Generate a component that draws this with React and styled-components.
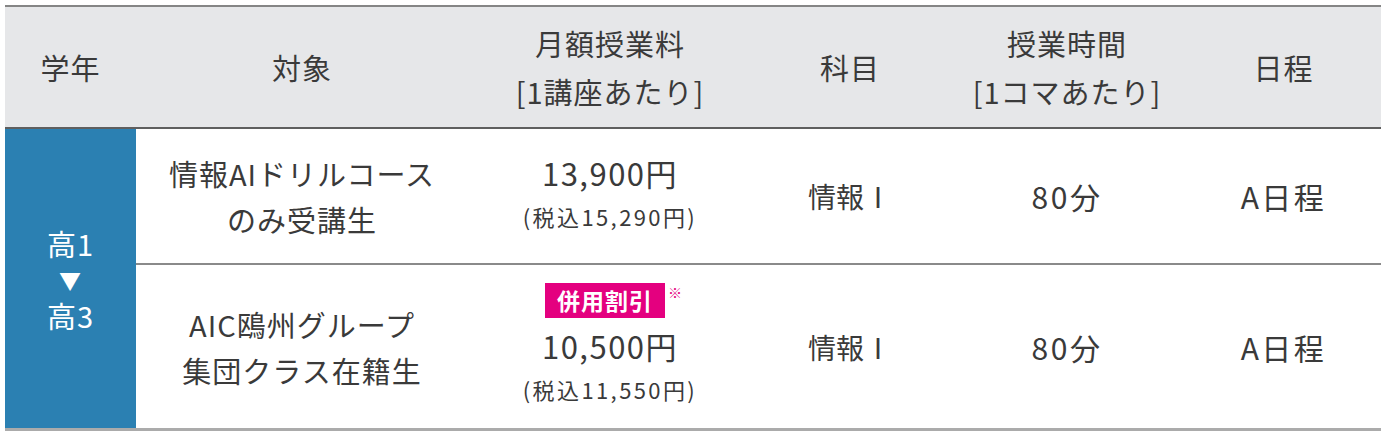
import React from "react";
import styled, { createGlobalStyle } from "styled-components";

const GlobalStyle = createGlobalStyle`
  body {
    margin: 0;
    background: #ffffff;
    font-family: "Noto Sans CJK JP", "Noto Sans", sans-serif;
    color: #333333;
  }
`;

const Wrapper = styled.div`
  padding: 5px 0 0 5px;
`;

const Table = styled.div`
  display: grid;
  grid-template-columns: 131px 332px 284px 196px 238px 195px;
  grid-template-rows: 122px 136px 163px;
  width: 1376px;
  border-top: 2px solid #858585;
  border-bottom: 3px solid #ababab;
`;

const HeadCell = styled.div`
  background: #e6e7e9;
  border-bottom: 2px solid #5f5f5f;
  display: flex;
  flex-direction: column;
  align-items: center;
  justify-content: center;
  font-size: 29px;
  line-height: 48px;
  letter-spacing: 1px;
  color: #3a3a3a;
`;

const GradeCell = styled.div`
  grid-row: 2 / span 2;
  background: #2b80b2;
  color: #ffffff;
  display: flex;
  flex-direction: column;
  align-items: center;
  justify-content: center;
  font-size: 29px;
  line-height: 42px;
  letter-spacing: 1px;
`;

const Arrow = styled.span`
  font-size: 22px;
  line-height: 30px;
`;

const Cell = styled.div`
  display: flex;
  flex-direction: column;
  align-items: center;
  justify-content: center;
  text-align: center;
  border-bottom: ${(p) => (p.$divider ? "2px solid #8a8a8a" : "none")};
  font-size: ${(p) => p.$size || 29}px;
  letter-spacing: ${(p) => p.$spacing ?? 1}px;
  line-height: 46px;
  color: #3a3a3a;
`;

const Price = styled.div`
  font-size: 31px;
  line-height: 40px;
  letter-spacing: 1.5px;
`;

const TaxIncl = styled.div`
  font-size: 22px;
  line-height: 46px;
  letter-spacing: 2.4px;
`;

const BadgeRow = styled.div`
  display: flex;
  align-items: flex-start;
  margin: 2px 0 8px 8px;
`;

const Badge = styled.span`
  background: #e4007f;
  color: #ffffff;
  font-weight: 700;
  font-size: 23px;
  line-height: 35px;
  padding: 0 12px;
  letter-spacing: 1px;
`;

const Note = styled.span`
  color: #e4007f;
  font-size: 14px;
  line-height: 14px;
  margin-left: 3px;
  margin-top: 2px;
`;

const rows = [
  {
    target: ["情報AIドリルコース", "のみ受講生"],
    price: "13,900円",
    tax: "(税込15,290円)",
    badge: false,
  },
  {
    target: ["AIC鴎州グループ", "集団クラス在籍生"],
    price: "10,500円",
    tax: "(税込11,550円)",
    badge: true,
  },
];

export default function App() {
  return (
    <Wrapper>
      <GlobalStyle />
      <Table>
        <HeadCell>学年</HeadCell>
        <HeadCell>対象</HeadCell>
        <HeadCell>
          <span>月額授業料</span>
          <span>[1講座あたり]</span>
        </HeadCell>
        <HeadCell>科目</HeadCell>
        <HeadCell>
          <span>授業時間</span>
          <span>[1コマあたり]</span>
        </HeadCell>
        <HeadCell>日程</HeadCell>

        <GradeCell>
          <span>高1</span>
          <Arrow>▼</Arrow>
          <span>高3</span>
        </GradeCell>

        {rows.map((r, i) => {
          const divider = i === 0;
          return (
            <React.Fragment key={i}>
              <Cell $divider={divider} $spacing={1}>
                {r.target.map((t) => (
                  <span key={t}>{t}</span>
                ))}
              </Cell>
              <Cell $divider={divider}>
                {r.badge && (
                  <BadgeRow>
                    <Badge>併用割引</Badge>
                    <Note>※</Note>
                  </BadgeRow>
                )}
                <Price>{r.price}</Price>
                <TaxIncl>{r.tax}</TaxIncl>
              </Cell>
              <Cell $divider={divider} $size={28} $spacing={0}>
                情報Ⅰ
              </Cell>
              <Cell $divider={divider} $size={30} $spacing={2.5}>
                80分
              </Cell>
              <Cell $divider={divider} $size={30} $spacing={2.5}>
                A日程
              </Cell>
            </React.Fragment>
          );
        })}
      </Table>
    </Wrapper>
  );
}
